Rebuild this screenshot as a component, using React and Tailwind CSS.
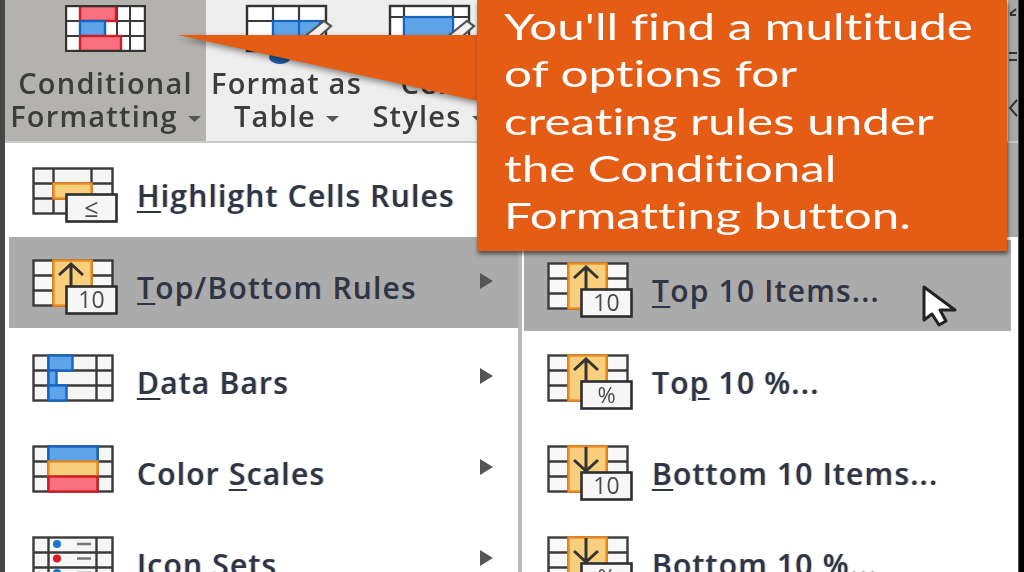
const INK = "#3a3a3a";
const BLUE = "#5ea4e8";
const BLUE_D = "#1565c0";
const RED = "#f9707e";
const RED_D = "#cc1f25";
const YEL = "#f8cf7c";
const ORG = "#ed8b1f";

function Grid({ cols, rows, w = 79, h = 45, x = 1.5, y = 1.5 }) {
  return (
    <g fill="none" stroke={INK} strokeWidth="2.4">
      {cols.map((c) => (
        <line key={"c" + c} x1={x + c} x2={x + c} y1={y} y2={y + h} />
      ))}
      {rows.map((r) => (
        <line key={"r" + r} y1={y + r} y2={y + r} x1={x} x2={x + w} />
      ))}
      <rect x={x} y={y} width={w} height={h} />
    </g>
  );
}

function Cell({ x, y, w, h, f, s }) {
  return <rect x={x + 1.5} y={y + 1.5} width={w} height={h} fill={f} stroke={s} strokeWidth="2.4" />;
}

function Box({ label, size = 23 }) {
  return (
    <g>
      <rect x="34.5" y="27.5" width="50" height="27" fill="#f6f6f6" stroke="#2e2e2e" strokeWidth="2.6" />
      <text x="59.5" y="49" textAnchor="middle" fontSize={size} fill="#4a4a4a" fontFamily="'Open Sans', sans-serif">
        {label}
      </text>
    </g>
  );
}

function Svg({ children }) {
  return (
    <svg width="88" height="47" viewBox="0 0 88 47" className="shrink-0 overflow-visible">
      {children}
    </svg>
  );
}

function HighlightIcon() {
  return (
    <Svg>
      <rect x="1.5" y="1.5" width="79" height="45" fill="#f5f5f5" />
      <Grid cols={[20, 58]} rows={[15, 30]} />
      <rect x="21.5" y="16.5" width="38" height="15" fill={YEL} stroke={ORG} strokeWidth="2.4" />
      <rect x="34.5" y="27.5" width="50" height="27" fill="#f6f6f6" stroke="#2e2e2e" strokeWidth="2.6" />
      <text x="59.5" y="50" textAnchor="middle" fontSize="25" fill="#4a4a4a" fontFamily="'Open Sans', sans-serif">≤</text>
    </Svg>
  );
}

function RankIcon({ down, label, size }) {
  return (
    <Svg>
      <rect x="1.5" y="1.5" width="79" height="45" fill="#f8f8f8" />
      <Grid cols={[20, 58]} rows={[15, 30]} />
      <rect x="21.5" y="1.5" width="38" height="45" fill={YEL} stroke={ORG} strokeWidth="2.4" />
      {down ? (
        <path d="M39 2V26M27 15L39 26L51 15" fill="none" stroke="#333" strokeWidth="3" />
      ) : (
        <path d="M39 27V5M27 16L39 5L51 16" fill="none" stroke="#333" strokeWidth="3" />
      )}
      <Box label={label} size={size} />
    </Svg>
  );
}

function BarsIcon() {
  return (
    <Svg>
      <rect x="1.5" y="1.5" width="79" height="45" fill="#f6f6f6" />
      <Grid cols={[15, 63]} rows={[15, 30]} />
      <Cell x={15} y={0} w={24} h={15} f={BLUE} s={BLUE_D} />
      <Cell x={15} y={15} w={8} h={15} f={BLUE} s={BLUE_D} />
      <Cell x={15} y={30} w={18} h={15} f={BLUE} s={BLUE_D} />
    </Svg>
  );
}

function ScalesIcon() {
  return (
    <Svg>
      <rect x="1.5" y="1.5" width="79" height="45" fill="#f6f6f6" />
      <Grid cols={[15, 64]} rows={[15, 30]} />
      <Cell x={15} y={0} w={49} h={15} f={BLUE} s={BLUE_D} />
      <Cell x={15} y={15} w={49} h={15} f={YEL} s={ORG} />
      <Cell x={15} y={30} w={49} h={15} f={RED} s={RED_D} />
    </Svg>
  );
}

function SetsIcon() {
  return (
    <Svg>
      <rect x="1.5" y="1.5" width="79" height="45" fill="#f6f6f6" />
      <Grid cols={[15, 63]} rows={[15, 30]} />
      <circle cx="25" cy="8" r="4" fill="#1f74c8" />
      <circle cx="25" cy="22.5" r="4" fill="#e0181f" />
      <circle cx="25" cy="37" r="4" fill="#1f74c8" />
      <path d="M45 8H59M45 22.5H59M45 37H59" stroke="#777" strokeWidth="2.6" />
    </Svg>
  );
}

function Arrow() {
  return (
    <svg width="13" height="16" viewBox="0 0 13 16" className="ml-auto mr-[25px] -mt-[3px] shrink-0">
      <path d="M0 0L13 8L0 16Z" fill="#555" />
    </svg>
  );
}

function U({ children }) {
  return <span className="underline decoration-2 underline-offset-[4px]">{children}</span>;
}

const labelClass =
  "pt-[11px] text-[30px] leading-[34px] font-semibold tracking-[1.2px] whitespace-nowrap text-[#2f3544] [text-shadow:1px_0_0_rgba(70,140,215,0.45),-1px_0_0_rgba(225,140,60,0.4)]";

function Row({ icon, active, arrow, extra, children }) {
  return (
    <div className={`flex items-center h-[91px] pl-[23px] shrink-0 ${active ? "bg-[#ababab]" : ""} ${extra || ""}`}>
      <span className="w-[105px] shrink-0 flex">{icon}</span>
      <span className={labelClass}>{children}</span>
      {arrow && <Arrow />}
    </div>
  );
}

function Caret() {
  return (
    <svg width="13" height="6" viewBox="0 0 13 6" className="inline-block ml-[10px] align-middle">
      <path d="M0 0H13L6.5 6Z" fill="#555" />
    </svg>
  );
}

function RibbonLabel({ first, second }) {
  return (
    <div className="mt-[14px] flex flex-col items-center text-[29px] leading-[33px] font-semibold tracking-[1.2px] text-[#3c3c3c] whitespace-nowrap">
      <span>{first}</span>
      <span>
        {second}
        <Caret />
      </span>
    </div>
  );
}

function CondIcon() {
  return (
    <svg width="81" height="47" viewBox="0 0 81 47" className="shrink-0">
      <rect x="1" y="1" width="79" height="45" fill="#fff" />
      <path d="M15 1V46M65 1V46M1 16H80M1 31H80M52 1V46" stroke={INK} strokeWidth="2" fill="none" />
      <rect x="15" y="1" width="36" height="15" fill={RED} stroke={RED_D} strokeWidth="2.4" />
      <rect x="15" y="16" width="25" height="15" fill={BLUE} stroke={BLUE_D} strokeWidth="2.4" />
      <rect x="15" y="31" width="41" height="15" fill={RED} stroke={RED_D} strokeWidth="2.4" />
      <rect x="1" y="1" width="79" height="45" fill="none" stroke="#333" strokeWidth="2.4" />
    </svg>
  );
}

function Pencil() {
  return (
    <g>
      <path d="M58 32L78 16L85 21L66 38Z" fill="#f4f4f4" stroke="#555" strokeWidth="2.2" />
    </g>
  );
}

function TableIcon() {
  return (
    <svg width="88" height="47" viewBox="0 0 88 47" className="shrink-0 ml-[7px] overflow-visible">
      <rect x="1" y="1" width="79" height="45" fill="#fff" />
      <path d="M27 1V46M53 1V46M1 16H80" stroke={INK} strokeWidth="2.2" fill="none" />
      <rect x="27" y="16" width="47" height="30" fill={BLUE} stroke={BLUE_D} strokeWidth="2.2" />
      <path d="M53 16V46" stroke={BLUE_D} strokeWidth="2.2" />
      <rect x="1" y="1" width="79" height="45" fill="none" stroke="#333" strokeWidth="2.4" />
      <Pencil />
      <ellipse cx="34" cy="52" rx="11" ry="7" fill="#1f5fa8" />
    </svg>
  );
}

function StyleIcon() {
  return (
    <svg width="88" height="47" viewBox="0 0 88 47" className="shrink-0 ml-[8px] overflow-visible">
      <rect x="1" y="1" width="79" height="45" fill="#fff" />
      <path d="M15 1V46M64 1V46M1 12H80" stroke={INK} strokeWidth="2.2" fill="none" />
      <rect x="15" y="12" width="49" height="34" fill={BLUE} stroke={BLUE_D} strokeWidth="2.2" />
      <rect x="1" y="1" width="79" height="45" fill="none" stroke="#333" strokeWidth="2.4" />
      <Pencil />
    </svg>
  );
}

function EdgeMarks() {
  return (
    <svg width="10" height="120" viewBox="0 0 10 120" className="shrink-0">
      <path d="M2 14L8 9M2 15H8M1 53H9M1 60H9M9 100L2 108L9 116" fill="none" stroke="#333" strokeWidth="2" />
    </svg>
  );
}

function Cursor() {
  return (
    <svg width="38" height="44" viewBox="0 0 38 44" className="absolute left-[921px] top-[284px]">
      <path d="M3 3V36L11 30L18 41L25 37L19 26L34 26Z" fill="#fff" stroke="#222" strokeWidth="3" strokeLinejoin="round" />
    </svg>
  );
}

function Callout() {
  return (
    <>
      <svg
        width="300"
        height="68"
        viewBox="0 0 300 68"
        className="absolute left-[178px] top-[34px] drop-shadow-[1px_3px_3px_rgba(0,0,0,0.45)]"
      >
        <path d="M0 1H300V67Z" fill="#e55c15" />
      </svg>
      <div className="absolute left-[477px] top-0 w-[530px] h-[251px] bg-[#e55c15] pt-[3px] pl-[27px] shadow-[1px_3px_4px_rgba(0,0,0,0.55)] font-['Lato',sans-serif] text-[36px] leading-[47.25px] text-white whitespace-nowrap [font-variant-ligatures:none]">
        <div className="origin-left scale-x-[1.37]">You'll find a multitude</div>
        <div className="origin-left scale-x-[1.37]">of options for</div>
        <div className="origin-left scale-x-[1.37]">creating rules under</div>
        <div className="origin-left scale-x-[1.37]">the Conditional</div>
        <div className="origin-left scale-x-[1.37]">Formatting button.</div>
      </div>
    </>
  );
}

export default function App() {
  return (
    <div className="relative flex w-[1024px] h-[572px] overflow-hidden bg-white font-['Open_Sans',sans-serif] blur-[0.6px]">
      <div className="w-[5px] shrink-0 bg-[#474747]" />
      <div className="w-[1013px] shrink-0 flex flex-col">
        <div className="h-[143px] shrink-0 flex bg-[#eeeeee] border-b-2 border-[#c9c9c9]">
          <div className="w-[201px] shrink-0 bg-[#b4b2af] flex flex-col items-center pt-[5px]">
            <CondIcon />
            <RibbonLabel first="Conditional" second="Formatting" />
          </div>
          <div className="w-[161px] shrink-0 flex flex-col items-center pt-[5px]">
            <TableIcon />
            <RibbonLabel first="Format as" second="Table" />
          </div>
          <div className="w-[123px] shrink-0 flex flex-col items-center pt-[5px]">
            <StyleIcon />
            <RibbonLabel first="Cell" second="Styles" />
          </div>
          <div className="flex-1" />
          <div className="w-[10px] shrink-0 bg-[#a8a8a8] flex">
            <EdgeMarks />
          </div>
        </div>
        <div className="flex-1 min-h-0 flex">
          <div className="w-[513px] shrink-0 flex flex-col bg-white pl-[4px]">
            <div className="h-[94px] shrink-0 flex items-center pl-[23px]">
              <span className="w-[105px] shrink-0 flex"><HighlightIcon /></span>
              <span className={labelClass}>
                <U>H</U>ighlight Cells Rules
              </span>
            </div>
            <Row active arrow icon={<RankIcon label="10" />}>
              <U>T</U>op/Bottom Rules
            </Row>
            <Row arrow extra="mt-[4px]" icon={<BarsIcon />}>
              <U>D</U>ata Bars
            </Row>
            <Row arrow icon={<ScalesIcon />}>
              Color <U>S</U>cales
            </Row>
            <Row arrow icon={<SetsIcon />}>
              <U>I</U>con Sets
            </Row>
          </div>
          <div className="flex-1 flex flex-col bg-[#a8a8a8]">
            <div className="h-[94px] shrink-0" />
            <div className="flex-1 flex flex-col bg-white border-l-4 border-[#b8b8b8] pt-[3px]">
              <Row active extra="ml-[2px] mr-[7px]" icon={<RankIcon label="10" />}>
                <U>T</U>op 10 Items...
              </Row>
              <Row extra="ml-[2px] mr-[7px] mt-[1px]" icon={<RankIcon label="%" size={22} />}>
                To<U>p</U> 10 %...
              </Row>
              <Row extra="ml-[2px] mr-[7px]" icon={<RankIcon down label="10" />}>
                <U>B</U>ottom 10 Items...
              </Row>
              <Row extra="ml-[2px] mr-[7px]" icon={<RankIcon down label="%" size={22} />}>
                B<U>o</U>ttom 10 %...
              </Row>
            </div>
          </div>
        </div>
      </div>
      <div className="flex-1 bg-black border-l border-[#555]" />
      <Callout />
      <Cursor />
    </div>
  );
}
